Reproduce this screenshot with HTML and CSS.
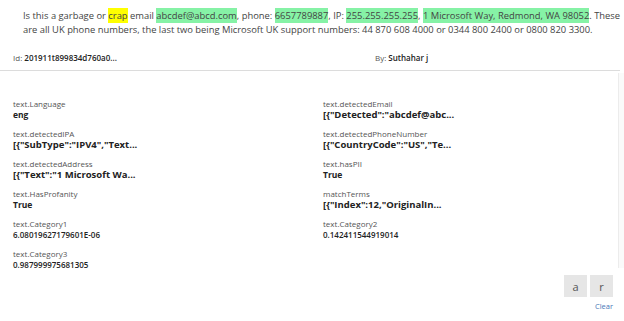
FILE: index.html
```html
<!DOCTYPE html>
<html>
<head>
<meta charset="utf-8">
<link rel="stylesheet" href="styles.css">
</head>
<body>
<div class="page">
  <div class="message">
    <div class="line">Is this a garbage or <span class="hl-y">crap</span> email <span class="hl-g">abcdef@abcd.com</span>, phone: <span class="hl-g">6657789887</span>, IP: <span class="hl-g">255.255.255.255</span>, <span class="hl-g">1 Microsoft Way, Redmond, WA 98052</span>. These</div>
    <div class="line">are all UK phone numbers, the last two being Microsoft UK support numbers: 44 870 608 4000 or 0344 800 2400 or 0800 820 3300.</div>
  </div>
  <div class="meta">
    <div class="meta-id">Id: <b>201911t899834d760a0...</b></div>
    <div class="meta-by">By: <b>Suthahar j</b></div>
  </div>
  <div class="main">
    <div class="fields">
      <div class="field"><div class="label">text.Language</div><div class="value">eng</div></div>
      <div class="field"><div class="label">text.detectedEmail</div><div class="value json">[{"Detected":"abcdef@abc...</div></div>
      <div class="field"><div class="label">text.detectedIPA</div><div class="value json">[{"SubType":"IPV4","Text...</div></div>
      <div class="field"><div class="label">text.detectedPhoneNumber</div><div class="value json">[{"CountryCode":"US","Te...</div></div>
      <div class="field"><div class="label">text.detectedAddress</div><div class="value json">[{"Text":"1 Microsoft Wa...</div></div>
      <div class="field"><div class="label">text.hasPII</div><div class="value">True</div></div>
      <div class="field"><div class="label">text.HasProfanity</div><div class="value">True</div></div>
      <div class="field"><div class="label">matchTerms</div><div class="value json">[{"Index":12,"OriginalIn...</div></div>
      <div class="field"><div class="label">text.Category1</div><div class="value num">6.08019627179601E-06</div></div>
      <div class="field"><div class="label">text.Category2</div><div class="value num">0.142411544919014</div></div>
      <div class="field"><div class="label">text.Category3</div><div class="value num">0.987999975681305</div></div>
    </div>
    <div class="strip"></div>
  </div>
  <div class="actions">
    <div class="buttons">
      <button class="btn">a</button>
      <button class="btn">r</button>
    </div>
    <a class="clear" href="#">Clear</a>
  </div>
</div>
</body>
</html>
```

FILE: styles.css
```css
html, body {
  margin: 0;
  padding: 0;
  background: #ffffff;
}
body {
  width: 624px;
  height: 321px;
  overflow: hidden;
  font-family: "Open Sans", "Noto Sans", sans-serif;
  color: #333;
}
.page {
  display: flex;
  flex-direction: column;
}
.message {
  padding: 9px 0 0 23px;
  font-size: 9.4px;
  line-height: 14px;
  color: #444;
  width: 601px;
  overflow: hidden;
}
.line {
  white-space: nowrap;
}
.hl-y {
  background: #ffff00;
  padding: 1px 0;
}
.hl-g {
  background: #86f2a6;
  padding: 1px 0;
}
.meta {
  display: flex;
  margin-top: 15px;
  padding: 0 0 6px 13px;
  border-bottom: 1px solid #dcdcdc;
  width: 607px;
  font-size: 8px;
  line-height: 12px;
  color: #555;
}
.meta b {
  color: #222;
  font-weight: 600;
}
.meta-id {
  width: 362px;
}
.main {
  display: flex;
  height: 197px;
}
.fields {
  display: grid;
  grid-template-columns: 310px 280px;
  grid-auto-rows: 30px;
  align-content: start;
  padding: 27px 0 0 13px;
  width: 606px;
}
.label {
  font-size: 8px;
  line-height: 11px;
  color: #555;
}
.value {
  font-size: 8.5px;
  line-height: 11px;
  font-weight: 700;
  color: #222;
}
.value.json {
  font-size: 9.5px;
}
.value.num {
  font-size: 8px;
  font-weight: 600;
}
.strip {
  width: 5px;
  margin-top: 2px;
  border-left: 1px solid #ececec;
  background: #fafafa;
}
.actions {
  display: flex;
  flex-direction: column;
  align-items: flex-end;
  padding-right: 11px;
}
.buttons {
  display: flex;
  gap: 3px;
  margin-top: 7px;
}
.btn {
  width: 23px;
  height: 22px;
  border: none;
  padding: 0;
  background: #e6e6e6;
  font-family: "Open Sans", sans-serif;
  font-size: 11px;
  color: #555;
}
.clear {
  margin-top: 4px;
  font-size: 7.5px;
  color: #4a78b8;
  text-decoration: none;
}
```
